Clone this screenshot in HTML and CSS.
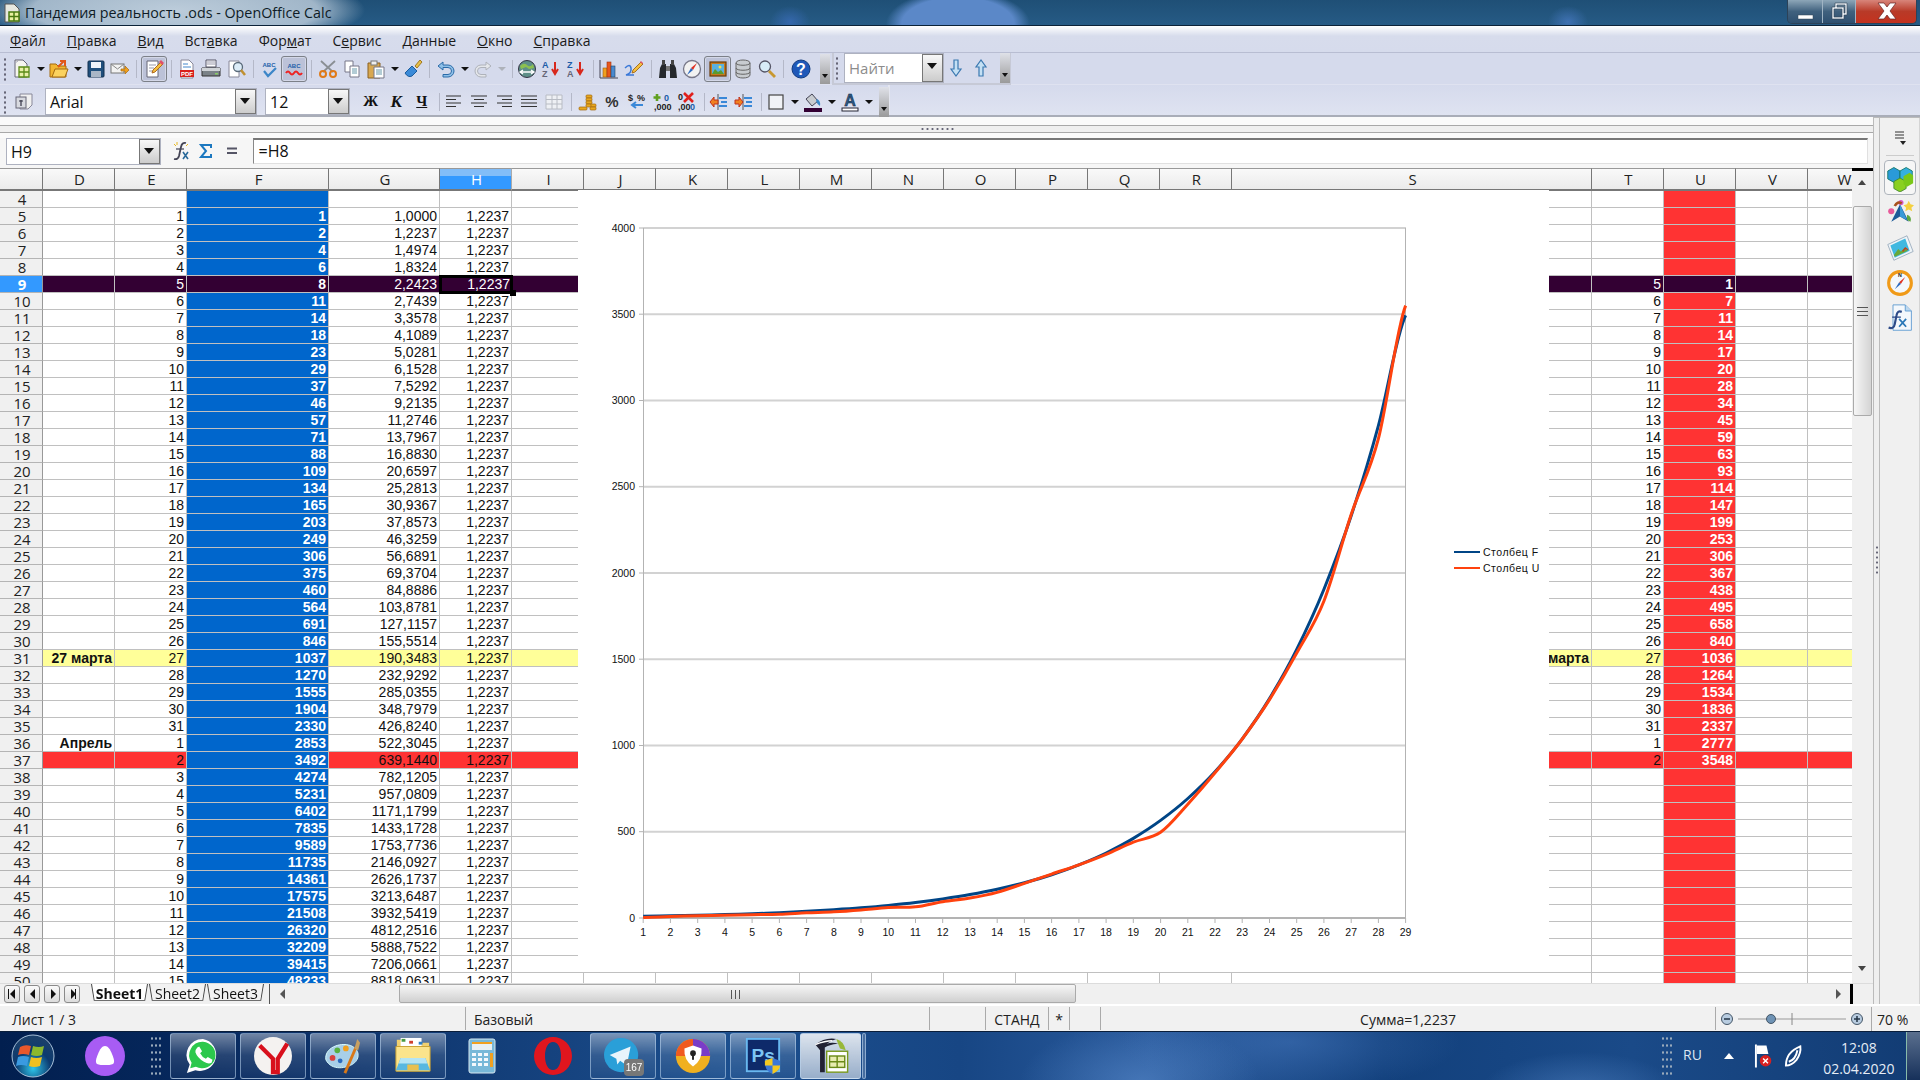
FILE: index.html
```html
<!DOCTYPE html>
<html lang="ru">
<head>
<meta charset="utf-8">
<title>Пандемия реальность .ods - OpenOffice Calc</title>
<link rel="stylesheet" href="styles.css">
</head>
<body>
<header class="titlebar">
  <svg class="ti" viewBox="0 0 20 20"><path d="M3 1h9l5 5v13H3z" fill="#e8e8e0" stroke="#555"/><path d="M7 9h10v9H7z" fill="#e8f0a0" stroke="#4a7a10" stroke-width="1.5"/><path d="M7 13.5h10M12 9v9" stroke="#4a7a10" stroke-width="1.5"/></svg>
  <span class="title-text">Пандемия реальность .ods - OpenOffice Calc</span>
  <div class="winbtns">
    <div class="wb"><svg width="35" height="23" viewBox="0 0 35 23"><rect x="10" y="15" width="15" height="4" fill="#fff" stroke="#345" stroke-width=".5"/></svg></div>
    <div class="wb"><svg width="33" height="23" viewBox="0 0 33 23"><path d="M12 3h12v12h-3v4H9V7h3zM14 5v2h7v6h1V5zM11 9v8h8V9z" fill="#e8eef4" stroke="#345" stroke-width=".6"/></svg></div>
    <div class="wb close"><svg width="60" height="23" viewBox="0 0 60 23"><path d="M22 3h6l3 4 3-4h6l-6 8 6 8h-6l-3-4-3 4h-6l6-8z" fill="#fff" stroke="#622" stroke-width=".7"/></svg></div>
  </div>
</header>

<nav class="menubar">
  <span><u>Ф</u>айл</span><span><u>П</u>равка</span><span><u>В</u>ид</span><span>Вст<u>а</u>вка</span><span>Фор<u>м</u>ат</span><span>С<u>е</u>рвис</span><span><u>Д</u>анные</span><span><u>О</u>кно</span><span><u>С</u>правка</span>
</nav>

<div class="tbrow tb1">
  <div class="grip"></div>
  <div class="ic"><svg viewBox="0 0 20 20"><path d="M3 1h8l4 4v13H3z" fill="#f5f5ee" stroke="#667"/><path d="M7 8h10v10H7z" fill="#e8f0a8" stroke="#5a8a16" stroke-width="1.3"/><path d="M7 13h10M12 8v10" stroke="#5a8a16" stroke-width="1.3"/><path d="M3 4l3-2" stroke="#aab"/></svg></div>
  <div class="dd"></div>
  <div class="ic"><svg viewBox="0 0 20 20"><path d="M1 5h6l2 2h8v11H1z" fill="#f2b632" stroke="#a36a10"/><path d="M3 18l3-8h13l-3 8z" fill="#fbd25e" stroke="#a36a10"/><path d="M9 8l6-6M11 2h5v5" fill="none" stroke="#e2571a" stroke-width="2"/></svg></div>
  <div class="dd"></div>
  <div class="ic"><svg viewBox="0 0 20 20"><rect x="2" y="2" width="16" height="16" rx="1" fill="#1f4f7c" stroke="#12304e"/><rect x="5" y="3" width="10" height="6" fill="#eef3f8"/><rect x="5" y="12" width="10" height="6" fill="#a9b6c6"/></svg></div>
  <div class="ic"><svg viewBox="0 0 20 20"><rect x="1" y="5" width="13" height="9" fill="#f2f2f2" stroke="#777"/><path d="M1 5l6.500 5L14 5" fill="none" stroke="#888"/><path d="M11 10h4V7l4 4-4 4v-3h-4z" fill="#f0a020" stroke="#a86a10" stroke-width=".7"/></svg></div>
  <div class="sep"></div>
  <div class="ic on"><svg viewBox="0 0 20 20"><path d="M3 2h11v16H3z" fill="#fff" stroke="#667"/><path d="M5 6h7M5 9h5M5 12h4" stroke="#99a"/><path d="M8 14l1-3 8-8 2 2-8 8z" fill="#f4c040" stroke="#b06a20"/><path d="M15 3l2-2 3 3-2 2z" fill="#e0506a"/></svg></div>
  <div class="sep s8"></div>
  <div class="ic"><svg viewBox="0 0 20 20"><path d="M4 1h8l4 4v14H4z" fill="#fff" stroke="#889"/><path d="M6 5h5M6 8h8" stroke="#48c"/><rect x="3" y="11" width="14" height="7" fill="#d8201c"/><text x="10" y="17" class="tiny w" text-anchor="middle">PDF</text></svg></div>
  <div class="ic"><svg viewBox="0 0 20 20"><path d="M5 1h10v7H5z" fill="#fff" stroke="#556"/><path d="M6 3h8M6 5h8" stroke="#99a"/><path d="M1 9h18v8H1z" fill="#7a8288" stroke="#333"/><path d="M1 9h18v3H1z" fill="#d0d4d8"/><rect x="14" y="14" width="3" height="1.500" fill="#8c6"/></svg></div>
  <div class="ic w26"><svg viewBox="0 0 20 20"><path d="M3 2h10v16H3z" fill="#fff" stroke="#889"/><circle cx="12" cy="8" r="4.500" fill="#dcecf8" stroke="#5a6a7a" stroke-width="1.300"/><path d="M15 11l4 5" stroke="#c09030" stroke-width="2.500"/></svg></div>
  <div class="sep s8"></div>
  <div class="ic"><svg viewBox="0 0 20 20"><text x="10" y="8" class="tiny b" text-anchor="middle">ABC</text><path d="M5 12l4 5 8-8" fill="none" stroke="#3c86c8" stroke-width="2.200"/></svg></div>
  <div class="ic on"><svg viewBox="0 0 20 20"><text x="10" y="9" class="tiny b" text-anchor="middle">ABC</text><path d="M2 14q2-3 4 0t4 0 4 0 4 0" fill="none" stroke="#e22" stroke-width="2"/></svg></div>
  <div class="sep"></div>
  <div class="ic"><svg viewBox="0 0 20 20"><path d="M3 2l12 11M17 2L5 13" stroke="#8a8f94" stroke-width="1.800"/><circle cx="5" cy="15" r="3" fill="none" stroke="#e07a18" stroke-width="2"/><circle cx="15" cy="15" r="3" fill="none" stroke="#e07a18" stroke-width="2"/></svg></div>
  <div class="ic"><svg viewBox="0 0 20 20"><path d="M3 2h8v11H3z" fill="#fff" stroke="#778"/><path d="M8 7h9v11H8z" fill="#fff" stroke="#778"/><path d="M10 10h5M10 12h5M10 14h5" stroke="#69a"/></svg></div>
  <div class="ic"><svg viewBox="0 0 20 20"><path d="M2 4h12v15H2z" fill="#d8a850" stroke="#8a6020"/><rect x="5" y="2" width="6" height="4" fill="#eee" stroke="#777"/><path d="M8 8h10v11H8z" fill="#fff" stroke="#778"/><path d="M10 11h6M10 13h6M10 15h6" stroke="#69a"/></svg></div>
  <div class="dd"></div>
  <div class="ic"><svg viewBox="0 0 20 20"><path d="M2 14l7-7 5 5-5 5q-4 2-7-3z" fill="#3a8ad8" stroke="#1c5c9c"/><path d="M12 7l5-6 2 2-5 6z" fill="#e8c048" stroke="#a07820"/></svg></div>
  <div class="sep"></div>
  <div class="ic"><svg viewBox="0 0 20 20"><path d="M7 3L2 7l5 4V8.500h5a3.500 3.500 0 0 1 0 7H7V18h5a6 6 0 0 0 0-12H7z" fill="#8ec0e8" stroke="#2a6aa8"/></svg></div>
  <div class="dd"></div>
  <div class="ic"><svg viewBox="0 0 20 20"><path d="M13 3l5 4-5 4V8.500H8a3.500 3.500 0 0 0 0 7h5V18H8A6 6 0 0 1 8 6h5z" fill="#e4e6ea" stroke="#aeb2ba"/></svg></div>
  <div class="dd off"></div>
  <div class="sep s7"></div>
  <div class="ic"><svg viewBox="0 0 20 20"><circle cx="10" cy="10" r="8.500" fill="#5e8f88" stroke="#334"/><path d="M3 7q4-4 7-1t6-1l1 4-5 1-3-2-5 2z" fill="#8cc050"/><path d="M4 13h12M6 15l-3-2 3-2M14 11l3 2-3 2" fill="none" stroke="#fff" stroke-width="1.300"/></svg></div>
  <div class="ic"><svg viewBox="0 0 20 20"><text x="1" y="9" class="tiny b big">A</text><text x="1" y="18" class="tiny g big">Z</text><path d="M14 3v11M11 10l3 5 3-5" fill="none" stroke="#d8281c" stroke-width="2"/></svg></div>
  <div class="ic w26"><svg viewBox="0 0 20 20"><text x="1" y="9" class="tiny b big">Z</text><text x="1" y="18" class="tiny g big">A</text><path d="M14 3v11M11 10l3 5 3-5" fill="none" stroke="#d8281c" stroke-width="2"/></svg></div>
  <div class="sep s8"></div>
  <div class="ic"><svg viewBox="0 0 20 20"><path d="M1 1v18h18" fill="none" stroke="#445"/><rect x="4" y="9" width="4" height="9" fill="#f0a020" stroke="#a06010" stroke-width=".6"/><rect x="8" y="3" width="4" height="15" fill="#e8581c" stroke="#a03010" stroke-width=".6"/><rect x="12" y="7" width="4" height="11" fill="#4a8ad0" stroke="#246" stroke-width=".6"/></svg></div>
  <div class="ic w26"><svg viewBox="0 0 20 20"><path d="M1 9q5-5 6 0t-5 7h8" fill="none" stroke="#3a78d8" stroke-width="1.500"/><path d="M8 14l1-3 8-8 2 2-8 8z" fill="#f4c040" stroke="#a87020"/><path d="M16 3l1-1 2 2-1 1z" fill="#e0506a"/></svg></div>
  <div class="sep"></div>
  <div class="ic"><svg viewBox="0 0 20 20"><path d="M2 9l2-4h4v14H1zM18 9l-2-4h-4v14h7z" fill="#25282c"/><rect x="4" y="1" width="3" height="5" fill="#444"/><rect x="13" y="1" width="3" height="5" fill="#444"/><rect x="8" y="7" width="4" height="5" fill="#777"/></svg></div>
  <div class="ic"><svg viewBox="0 0 20 20"><circle cx="10" cy="10" r="8.500" fill="#f2f2f2" stroke="#778" stroke-width="1.300"/><path d="M15 4l-6 5 2 2z" fill="#e03020"/><path d="M5 16l4-7 2 2z" fill="#2a6ac0"/></svg></div>
  <div class="ic w27 on"><svg viewBox="0 0 20 20"><rect x="2" y="3" width="16" height="14" fill="#c27a20" stroke="#6a3a08" stroke-width="1.200"/><rect x="4" y="5" width="12" height="10" fill="#58b0e0"/><path d="M4 15l3-5 3 3 3-2 3 4z" fill="#5a9a30"/><circle cx="12" cy="8" r="1.500" fill="#f4e050"/></svg></div>
  <div class="ic"><svg viewBox="0 0 20 20"><path d="M3 4c0-4 14-4 14 0v12c0 4-14 4-14 0z" fill="#c8ccd0" stroke="#666"/><path d="M3 4c0 3 14 3 14 0M3 9c0 3 14 3 14 0M3 13c0 3 14 3 14 0" fill="none" stroke="#666"/></svg></div>
  <div class="ic"><svg viewBox="0 0 20 20"><circle cx="8" cy="7.500" r="5.500" fill="#d8ecf8" stroke="#556" stroke-width="1.300"/><path d="M12 12l6 6" stroke="#c89830" stroke-width="2.800"/></svg></div>
  <div class="sep s10"></div>
  <div class="ic"><svg viewBox="0 0 20 20"><circle cx="10" cy="10" r="9" fill="#1f58b8" stroke="#123c80"/><text x="10" y="15.500" class="q" text-anchor="middle">?</text></svg></div>
  <div class="over"></div>
  <div class="tbgap"></div>
  <div class="findbar">
    <div class="grip"></div>
    <div class="combo find"><span class="ctext grey">Найти</span><i class="cbtn bordered"></i></div>
    <div class="ic"><svg viewBox="0 0 20 20"><path d="M8 2h4v9h3l-5 7-5-7h3z" fill="#c4e0f4" stroke="#3a78b0" stroke-width="1.200"/></svg></div>
    <div class="ic mid"><svg viewBox="0 0 20 20"><path d="M8 18h4V9h3l-5-7-5 7h3z" fill="#c4e0f4" stroke="#3a78b0" stroke-width="1.200"/></svg></div>
    <div class="over"></div>
  </div>
</div>

<div class="tbrow tb2">
  <div class="tb2main">
    <div class="grip"></div>
    <div class="ic stylei"><svg viewBox="0 0 20 20"><path d="M6 2h12v11l-4 4H6z" fill="#f0f0f0" stroke="#889"/><rect x="2" y="5" width="10" height="11" fill="#d8dae0" stroke="#667"/><path d="M7 8v6M5 9h4" stroke="#334" stroke-width="1.200"/></svg></div>
    <div class="combo font"><span class="ctext">Arial</span><i class="cbtn"></i></div>
    <div class="combo size"><span class="ctext">12</span><i class="cbtn"></i></div>
    <div class="fmt">Ж</div><div class="fmt it">К</div><div class="fmt ul">Ч</div>
    <div class="sep s7"></div>
    <div class="ic w25"><svg viewBox="0 0 20 20"><path d="M2 4h15M2 7.500h10M2 11h15M2 14.500h10" stroke="#333" stroke-width="1.200"/></svg></div>
    <div class="ic w25"><svg viewBox="0 0 20 20"><path d="M2 4h16M5 7.500h10M2 11h16M5 14.500h10" stroke="#333" stroke-width="1.200"/></svg></div>
    <div class="ic w25"><svg viewBox="0 0 20 20"><path d="M3 4h15M8 7.500h10M3 11h15M8 14.500h10" stroke="#333" stroke-width="1.200"/></svg></div>
    <div class="ic w25"><svg viewBox="0 0 20 20"><path d="M2 4h16M2 7.500h16M2 11h16M2 14.500h16" stroke="#333" stroke-width="1.200"/></svg></div>
    <div class="ic w25"><svg viewBox="0 0 20 20"><path d="M2 3h16v14H2zM2 7.500h16M2 12h16M8 3v14M13 3v14" fill="#eef0f4" stroke="#b8bcc4"/></svg></div>
    <div class="sep s8"></div>
    <div class="ic w25"><svg viewBox="0 0 20 20"><g fill="#e8a820" stroke="#a06810" stroke-width=".7"><rect x="9" y="3" width="6" height="3" rx="1"/><rect x="9" y="6" width="6" height="3" rx="1"/><rect x="9" y="9" width="6" height="3" rx="1"/><rect x="13" y="12" width="6" height="3" rx="1"/><rect x="13" y="15" width="6" height="3" rx="1"/><rect x="2" y="15" width="8" height="3" rx="1"/><rect x="9" y="12" width="5" height="3" rx="1"/></g></svg></div>
    <div class="ic w25"><span class="pct">%</span></div>
    <div class="ic w25"><svg viewBox="0 0 20 20"><text x="1" y="9" class="tiny k big">$</text><text x="10" y="9" class="tiny k big">%</text><path d="M16 13H6M9 10l-4 3 4 3" fill="none" stroke="#3a88d8" stroke-width="2"/></svg></div>
    <div class="ic w25"><svg viewBox="0 0 20 20"><path d="M5 2v7M1.500 5.500h7" stroke="#60a020" stroke-width="2.600"/><text x="12" y="9" class="tiny b big">0</text><text x="2" y="18" class="tiny k big">,000</text></svg></div>
    <div class="ic w25"><svg viewBox="0 0 20 20"><text x="1" y="8" class="tiny k big">0</text><path d="M7 1l9 9M16 1l-9 9" stroke="#e0201c" stroke-width="2.600"/><text x="1" y="18" class="tiny k big">,00</text><text x="13" y="18" class="tiny b big">0</text></svg></div>
    <div class="sep s7"></div>
    <div class="ic"><svg viewBox="0 0 20 20"><path d="M10 6h8M12 10h6M10 14h8" stroke="#3a88d8" stroke-width="1.800"/><path d="M9 2v16M9 5v0" stroke="#333" stroke-width=".8"/><path d="M9 8H5V5l-4 5 4 5v-3h4z" fill="#f08020" stroke="#c0301c"/></svg></div>
    <div class="ic w26"><svg viewBox="0 0 20 20"><path d="M10 6h8M12 10h6M10 14h8" stroke="#3a88d8" stroke-width="1.800"/><path d="M9 2v16" stroke="#333" stroke-width=".8"/><path d="M1 8h4V5l4 5-4 5v-3H1z" fill="#f08020" stroke="#c0301c"/></svg></div>
    <div class="sep s7"></div>
    <div class="ic"><svg viewBox="0 0 20 20"><rect x="3" y="3" width="14" height="14" fill="#f0f2f6" stroke="#444" stroke-width="1.200"/></svg></div>
    <div class="dd"></div>
    <div class="ic"><svg viewBox="0 0 20 20"><path d="M3 7l6-5 6 7-6 5z" fill="#c8ccd0" stroke="#445"/><path d="M14 7q4 2 3 7-3-2-4-5z" fill="#3a88c8"/><rect x="1" y="16" width="18" height="4" fill="#330033"/></svg></div>
    <div class="dd"></div>
    <div class="ic"><svg viewBox="0 0 20 20"><text x="10" y="14" class="fa" text-anchor="middle">A</text><rect x="2" y="16" width="16" height="3" fill="#fff" stroke="#223"/></svg></div>
    <div class="dd"></div>
    <div class="over tight"></div>
  </div>
</div>

<div class="work">
  <div class="leftcol">
    <div class="strip"><div class="strip-line"><span class="handle"></span></div></div>
    <div class="fbar">
      <div class="combo name"><span class="ctext">H9</span><i class="cbtn"></i></div>
      <div class="fbi fx"><svg viewBox="0 0 20 20"><path d="M15 2q-4-1-5 4l-2 9q-1 4-5 3" fill="none" stroke="#445" stroke-width="1.800"/><path d="M5 8h8" stroke="#445" stroke-width="1.200"/><path d="M12 11l5 7M17 11l-5 7" stroke="#2a6a9a" stroke-width="1.600"/><path d="M3 3l2 2M6 1v3M17 3l-2 2" stroke="#e8b820"/></svg></div>
      <div class="fbi"><svg viewBox="0 0 20 20"><path d="M15 7V4H5l5 6-5 6h10v-3" fill="none" stroke="#1c78c0" stroke-width="2"/></svg></div>
      <div class="fbi"><svg viewBox="0 0 20 20"><path d="M5 7.500h10M5 12h10" stroke="#556" stroke-width="1.800"/></svg></div>
      <div class="finput">=H8</div>
    </div>
    <div class="sheetarea">
      <div class="gridwrap">
        <table class="sheet">
          <colgroup><col class="c0"><col class="c72"><col class="c72"><col class="c142"><col class="c111"><col class="c72"><col class="c72"><col class="c72"><col class="c72"><col class="c72"><col class="c72"><col class="c72"><col class="c72"><col class="c72"><col class="c72"><col class="c72"><col class="c360"><col class="c72"><col class="c72"><col class="c72"><col class="c72"></colgroup>
          <thead><tr><th></th><th>D</th><th>E</th><th>F</th><th>G</th><th class="act">H</th><th>I</th><th>J</th><th>K</th><th>L</th><th>M</th><th>N</th><th>O</th><th>P</th><th>Q</th><th>R</th><th>S</th><th>T</th><th>U</th><th>V</th><th>W</th></tr></thead>
          <tbody>
<tr><th>4<td><td><td><td><td><td><td><td><td><td><td><td><td><td><td><td><td><td><td><td>
<tr><th>5<td><td>1<td>1<td>1,0000<td>1,2237<td><td><td><td><td><td><td><td><td><td><td><td><td><td><td>
<tr><th>6<td><td>2<td>2<td>1,2237<td>1,2237<td><td><td><td><td><td><td><td><td><td><td><td><td><td><td>
<tr><th>7<td><td>3<td>4<td>1,4974<td>1,2237<td><td><td><td><td><td><td><td><td><td><td><td><td><td><td>
<tr><th>8<td><td>4<td>6<td>1,8324<td>1,2237<td><td><td><td><td><td><td><td><td><td><td><td><td><td><td>
<tr class="d"><th>9<td><td>5<td>8<td>2,2423<td class="cur">1,2237<td><td><td><td><td><td><td><td><td><td><td><td>5<td>1<td><td>
<tr><th>10<td><td>6<td>11<td>2,7439<td>1,2237<td><td><td><td><td><td><td><td><td><td><td><td>6<td>7<td><td>
<tr><th>11<td><td>7<td>14<td>3,3578<td>1,2237<td><td><td><td><td><td><td><td><td><td><td><td>7<td>11<td><td>
<tr><th>12<td><td>8<td>18<td>4,1089<td>1,2237<td><td><td><td><td><td><td><td><td><td><td><td>8<td>14<td><td>
<tr><th>13<td><td>9<td>23<td>5,0281<td>1,2237<td><td><td><td><td><td><td><td><td><td><td><td>9<td>17<td><td>
<tr><th>14<td><td>10<td>29<td>6,1528<td>1,2237<td><td><td><td><td><td><td><td><td><td><td><td>10<td>20<td><td>
<tr><th>15<td><td>11<td>37<td>7,5292<td>1,2237<td><td><td><td><td><td><td><td><td><td><td><td>11<td>28<td><td>
<tr><th>16<td><td>12<td>46<td>9,2135<td>1,2237<td><td><td><td><td><td><td><td><td><td><td><td>12<td>34<td><td>
<tr><th>17<td><td>13<td>57<td>11,2746<td>1,2237<td><td><td><td><td><td><td><td><td><td><td><td>13<td>45<td><td>
<tr><th>18<td><td>14<td>71<td>13,7967<td>1,2237<td><td><td><td><td><td><td><td><td><td><td><td>14<td>59<td><td>
<tr><th>19<td><td>15<td>88<td>16,8830<td>1,2237<td><td><td><td><td><td><td><td><td><td><td><td>15<td>63<td><td>
<tr><th>20<td><td>16<td>109<td>20,6597<td>1,2237<td><td><td><td><td><td><td><td><td><td><td><td>16<td>93<td><td>
<tr><th>21<td><td>17<td>134<td>25,2813<td>1,2237<td><td><td><td><td><td><td><td><td><td><td><td>17<td>114<td><td>
<tr><th>22<td><td>18<td>165<td>30,9367<td>1,2237<td><td><td><td><td><td><td><td><td><td><td><td>18<td>147<td><td>
<tr><th>23<td><td>19<td>203<td>37,8573<td>1,2237<td><td><td><td><td><td><td><td><td><td><td><td>19<td>199<td><td>
<tr><th>24<td><td>20<td>249<td>46,3259<td>1,2237<td><td><td><td><td><td><td><td><td><td><td><td>20<td>253<td><td>
<tr><th>25<td><td>21<td>306<td>56,6891<td>1,2237<td><td><td><td><td><td><td><td><td><td><td><td>21<td>306<td><td>
<tr><th>26<td><td>22<td>375<td>69,3704<td>1,2237<td><td><td><td><td><td><td><td><td><td><td><td>22<td>367<td><td>
<tr><th>27<td><td>23<td>460<td>84,8886<td>1,2237<td><td><td><td><td><td><td><td><td><td><td><td>23<td>438<td><td>
<tr><th>28<td><td>24<td>564<td>103,8781<td>1,2237<td><td><td><td><td><td><td><td><td><td><td><td>24<td>495<td><td>
<tr><th>29<td><td>25<td>691<td>127,1157<td>1,2237<td><td><td><td><td><td><td><td><td><td><td><td>25<td>658<td><td>
<tr><th>30<td><td>26<td>846<td>155,5514<td>1,2237<td><td><td><td><td><td><td><td><td><td><td><td>26<td>840<td><td>
<tr class="y"><th>31<td class="lb">27 марта<td>27<td>1037<td>190,3483<td>1,2237<td><td><td><td><td><td><td><td><td><td><td class="lb">27 марта<td>27<td>1036<td><td>
<tr><th>32<td><td>28<td>1270<td>232,9292<td>1,2237<td><td><td><td><td><td><td><td><td><td><td><td>28<td>1264<td><td>
<tr><th>33<td><td>29<td>1555<td>285,0355<td>1,2237<td><td><td><td><td><td><td><td><td><td><td><td>29<td>1534<td><td>
<tr><th>34<td><td>30<td>1904<td>348,7979<td>1,2237<td><td><td><td><td><td><td><td><td><td><td><td>30<td>1836<td><td>
<tr><th>35<td><td>31<td>2330<td>426,8240<td>1,2237<td><td><td><td><td><td><td><td><td><td><td><td>31<td>2337<td><td>
<tr><th>36<td class="lb">Апрель<td>1<td>2853<td>522,3045<td>1,2237<td><td><td><td><td><td><td><td><td><td><td><td>1<td>2777<td><td>
<tr class="r"><th>37<td><td>2<td>3492<td>639,1440<td>1,2237<td><td><td><td><td><td><td><td><td><td><td><td>2<td>3548<td><td>
<tr><th>38<td><td>3<td>4274<td>782,1205<td>1,2237<td><td><td><td><td><td><td><td><td><td><td><td><td><td><td>
<tr><th>39<td><td>4<td>5231<td>957,0809<td>1,2237<td><td><td><td><td><td><td><td><td><td><td><td><td><td><td>
<tr><th>40<td><td>5<td>6402<td>1171,1799<td>1,2237<td><td><td><td><td><td><td><td><td><td><td><td><td><td><td>
<tr><th>41<td><td>6<td>7835<td>1433,1728<td>1,2237<td><td><td><td><td><td><td><td><td><td><td><td><td><td><td>
<tr><th>42<td><td>7<td>9589<td>1753,7736<td>1,2237<td><td><td><td><td><td><td><td><td><td><td><td><td><td><td>
<tr><th>43<td><td>8<td>11735<td>2146,0927<td>1,2237<td><td><td><td><td><td><td><td><td><td><td><td><td><td><td>
<tr><th>44<td><td>9<td>14361<td>2626,1737<td>1,2237<td><td><td><td><td><td><td><td><td><td><td><td><td><td><td>
<tr><th>45<td><td>10<td>17575<td>3213,6487<td>1,2237<td><td><td><td><td><td><td><td><td><td><td><td><td><td><td>
<tr><th>46<td><td>11<td>21508<td>3932,5419<td>1,2237<td><td><td><td><td><td><td><td><td><td><td><td><td><td><td>
<tr><th>47<td><td>12<td>26320<td>4812,2516<td>1,2237<td><td><td><td><td><td><td><td><td><td><td><td><td><td><td>
<tr><th>48<td><td>13<td>32209<td>5888,7522<td>1,2237<td><td><td><td><td><td><td><td><td><td><td><td><td><td><td>
<tr><th>49<td><td>14<td>39415<td>7206,0661<td>1,2237<td><td><td><td><td><td><td><td><td><td><td><td><td><td><td>
<tr><th>50<td><td>15<td>48233<td>8818,0631<td>1,2237<td><td><td><td><td><td><td><td><td><td><td><td><td><td><td>
          </tbody>
        </table>
        <svg class="chart" viewBox="578 190 971 782" width="971" height="782">
          <rect x="578" y="190" width="971" height="782" fill="#fff"/>
          <g class="gl"><path d="M643 228H1406M643 314.200H1406M643 400.500H1406M643 486.700H1406M643 573H1406M643 659.200H1406M643 745.500H1406M643 831.700H1406"/></g>
          <path class="ax" d="M643.500 228V918M1405.500 228V918M639 228h4M639 314.200h4M639 400.500h4M639 486.700h4M639 573h4M639 659.200h4M639 745.500h4M639 831.700h4M639 918h4"/>
          <path class="ax2" d="M643 918H1406"/>
          <path class="ax" d="M643.200 918v5M670.400 918v5M697.700 918v5M724.900 918v5M752.100 918v5M779.400 918v5M806.600 918v5M833.800 918v5M861 918v5M888.300 918v5M915.500 918v5M942.700 918v5M970 918v5M997.200 918v5M1024.400 918v5M1051.600 918v5M1078.900 918v5M1106.100 918v5M1133.300 918v5M1160.600 918v5M1187.800 918v5M1215 918v5M1242.200 918v5M1269.500 918v5M1296.700 918v5M1323.900 918v5M1351.200 918v5M1378.400 918v5M1405.600 918v5"/>
          <g class="yl" text-anchor="end"><text x="635" y="231.500">4000</text><text x="635" y="317.700">3500</text><text x="635" y="404">3000</text><text x="635" y="490.200">2500</text><text x="635" y="576.500">2000</text><text x="635" y="662.700">1500</text><text x="635" y="749">1000</text><text x="635" y="835.200">500</text><text x="635" y="921.500">0</text></g>
          <g class="yl" text-anchor="middle"><text x="643.200" y="936">1</text><text x="670.400" y="936">2</text><text x="697.700" y="936">3</text><text x="724.900" y="936">4</text><text x="752.100" y="936">5</text><text x="779.400" y="936">6</text><text x="806.600" y="936">7</text><text x="833.800" y="936">8</text><text x="861" y="936">9</text><text x="888.300" y="936">10</text><text x="915.500" y="936">11</text><text x="942.700" y="936">12</text><text x="970" y="936">13</text><text x="997.200" y="936">14</text><text x="1024.400" y="936">15</text><text x="1051.600" y="936">16</text><text x="1078.900" y="936">17</text><text x="1106.100" y="936">18</text><text x="1133.300" y="936">19</text><text x="1160.600" y="936">20</text><text x="1187.800" y="936">21</text><text x="1215" y="936">22</text><text x="1242.200" y="936">23</text><text x="1269.500" y="936">24</text><text x="1296.700" y="936">25</text><text x="1323.900" y="936">26</text><text x="1351.200" y="936">27</text><text x="1378.400" y="936">28</text><text x="1405.600" y="936">29</text></g>
          <g transform="translate(643.2 917.7) scale(27.23 -0.1725)">
            <path class="sf" vector-effect="non-scaling-stroke" d="M0 8S.67 10 1 11S1.670 12.800 2 14S2.670 16.500 3 18S3.670 21.200 4 23S4.670 26.700 5 29S5.670 34.200 6 37S6.670 42.700 7 46S7.670 52.800 8 57S8.670 65.800 9 71S9.670 81.700 10 88S10.670 101.300 11 109S11.670 124.700 12 134S12.670 153.500 13 165S13.670 189 14 203S14.670 231.800 15 249S15.670 285 16 306S16.670 349.300 17 375S17.670 428.500 18 460S18.670 525.500 19 564S19.670 644 20 691S20.670 788.300 21 846S21.670 966.300 22 1037S22.670 1183.700 23 1270S23.670 1449.300 24 1555S24.670 1774.800 25 1904S25.670 2171.800 26 2330S26.670 2659.300 27 2853S27.670 3385.500 28 3492"/>
            <path class="su" vector-effect="non-scaling-stroke" d="M0 1S.67 5.300 1 7S1.670 9.800 2 11S2.670 13 3 14S3.670 16 4 17S4.670 18.200 5 20S5.670 25.700 6 28S6.670 31.200 7 34S7.670 40.800 8 45S8.670 56 9 59S9.670 57.300 10 63S10.670 84.500 11 93S11.670 105 12 114S12.670 132.800 13 147S13.670 181.300 14 199S14.670 235.200 15 253S15.670 287 16 306S16.670 345 17 367S17.670 416.700 18 438S18.670 458.300 19 495S19.670 600.500 20 658S20.670 777 21 840S21.670 965.300 22 1036S22.670 1181 23 1264S23.670 1438.700 24 1534S24.670 1702.200 25 1836S25.670 2180.200 26 2337S26.670 2575.200 27 2777S27.670 3419.500 28 3548"/>
          </g>
          <path class="sf thin" d="M1454 552h26"/><path class="su thin" d="M1454 568h26"/>
          <g class="leg"><text x="1483" y="556">Столбец F</text><text x="1483" y="572">Столбец U</text></g>
        </svg>
      </div>
      <aside class="vscroll">
        <div class="vcap"></div>
        <div class="arrow up"></div>
        <div class="vthumb"><span class="tgrip"></span></div>
        <div class="vfill"></div>
        <div class="arrow down"></div>
      </aside>
    </div>
    <div class="tabbar">
      <div class="nav"><span class="nb f"></span><span class="nb p"></span><span class="nb n"></span><span class="nb l"></span></div>
      <div class="tab active"><span>Sheet1</span></div><div class="tab"><span>Sheet2</span></div><div class="tab"><span>Sheet3</span></div>
      <div class="tabend"></div>
      <div class="hscroll">
        <span class="hl"></span>
        <div class="hthumb"><span class="hgrip"></span></div>
        <span class="hr"></span>
      </div>
    </div>
  </div>
  <aside class="sidebar">
    <div class="sgrip"></div>
    <div class="sicons">
      <div class="smenu"><svg width="14" height="16" viewBox="0 0 14 16"><path d="M2 2h9M2 5h9M2 8h9" stroke="#333"/><path d="M7 11h6l-3 4z" fill="#222"/></svg></div>
      <div class="srule"></div>
      <div class="si on"><svg viewBox="0 0 32 32"><path d="M2 8l7-4 7 4v9l-7 4-7-4z" fill="#2a9ad8" stroke="#176"/><path d="M16 8l7-4 7 4v9l-7 4-7-4z" fill="#34b0e0" stroke="#176"/><path d="M9 20l7-4 7 4v8l-7 4-7-4z" fill="#8ad020" stroke="#483"/><path d="M20 14l7-4 4 3v9l-7 4-4-3z" fill="#7ac818"/></svg></div>
      <div class="si"><svg viewBox="0 0 32 32"><path d="M6 26L16 6l10 20-10-6z" fill="#1c5a98"/><path d="M16 6l8 18-8-4z" fill="#3a9ad8"/><circle cx="6" cy="14" r="3.500" fill="#e85a9a"/><circle cx="17" cy="4" r="3" fill="#d85ac8"/><path d="M26 2l2 4 4 1-3 3 1 4-4-2-4 2 1-4-3-3 4-1z" fill="#f4d040"/><path d="M10 8q3-6 8-3" fill="none" stroke="#a8501c" stroke-width="3"/><path d="M24 18q6 2 4 8l-4-2z" fill="#60a840"/></svg></div>
      <div class="si"><svg viewBox="0 0 32 32"><path d="M2 12L24 2l7 18-22 10z" fill="#eef4f8" stroke="#9ab"/><path d="M5 13l17-8 5 14-17 8z" fill="#40b8e0"/><path d="M9 24l5-7 3 3 4-4 4 3-15 7z" fill="#68a838"/><path d="M19 20l3-4 3 2" fill="none" stroke="#c04020" stroke-width="1.500"/></svg></div>
      <div class="si"><svg viewBox="0 0 32 32"><circle cx="16" cy="16" r="13" fill="#f4f8fc" stroke="#f09a18" stroke-width="3.500"/><path d="M22 9l-7 6 2 2z" fill="#e03020"/><path d="M10 23l5-8 2 2z" fill="#2a6ac0"/><text x="16" y="9" class="tiny k" text-anchor="middle">N</text></svg></div>
      <div class="si"><svg viewBox="0 0 32 32"><path d="M8 1h14l7 7v22H8z" fill="#f4f8fc" stroke="#5a98d0"/><path d="M22 1v7h7" fill="#bcd8f0" stroke="#5a98d0"/><path d="M18 9q-5-2-6 4l-2 10q-1 6-7 4" fill="none" stroke="#2c4a88" stroke-width="2.500"/><path d="M7 15h10" stroke="#2c4a88" stroke-width="1.500"/><path d="M15 17l8 9M23 17l-8 9" stroke="#2a78b8" stroke-width="2"/></svg></div>
    </div>
  </aside>
</div>

<footer class="statusbar">
  <div class="st st-sheet">Лист 1 / 3</div>
  <div class="st st-style">Базовый</div>
  <div class="st st-lang"></div>
  <div class="st st-mode">СТАНД</div>
  <div class="st st-mod">*</div>
  <div class="st st-sel"></div>
  <div class="st st-sum">Сумма=1,2237</div>
  <div class="st-zoom"><svg width="156" height="24" viewBox="0 0 156 24"><circle cx="11" cy="12" r="5.500" fill="#b8cce0" stroke="#456"/><path d="M8 12h6" stroke="#234" stroke-width="1.500"/><path d="M22 12h108" stroke="#999"/><path d="M76 6v12" stroke="#888"/><circle cx="55" cy="12" r="4.500" fill="#6f93b5" stroke="#456"/><circle cx="141" cy="12" r="5.500" fill="#b8cce0" stroke="#456"/><path d="M138 12h6M141 9v6" stroke="#234" stroke-width="1.500"/></svg></div>
  <div class="st st-pct">70 %</div>
</footer>

<div class="taskbar">
  <div class="orb"><svg viewBox="0 0 44 44"><defs><radialGradient id="og" cx="50%" cy="80%" r="70%"><stop offset="0" stop-color="#2ec4e8"/><stop offset=".6" stop-color="#0c3a70"/><stop offset="1" stop-color="#1a3f6a"/></radialGradient></defs><circle cx="22" cy="22" r="21" fill="url(#og)" stroke="#a8c0d8"/><path d="M9 13q5-3 11-1l-2 9q-6-2-11 0z" fill="#e8582c"/><path d="M22 12q6 2 11 0l-2 9q-5 2-11 0z" fill="#8cb82c"/><path d="M7 23q5-2 11 0l-2 9q-6-2-11 0z" fill="#3a9ae0"/><path d="M20 23q5 2 11 0l-2 9q-6 2-11 0z" fill="#f0c020"/></svg></div>
  <div class="alice"><svg viewBox="0 0 40 40"><circle cx="20" cy="20" r="20" fill="#a85cf4"/><path d="M20 10c3 0 5 3 7 8 2 5 3 8 1 10-2 1-5 1-8 1s-6 0-8-1c-2-2-1-5 1-10 2-5 4-8 7-8z" fill="#fff"/></svg></div>
  <div class="tgrip2"></div>
  <div class="tk"><svg viewBox="0 0 40 40"><path d="M20 2a17 17 0 0 0-14 27L3 38l9-3A17 17 0 1 0 20 2z" fill="#fff"/><path d="M20 5a14 14 0 0 0-12 22l-1.500 6 6-1.700A14 14 0 1 0 20 5z" fill="#2cc84c"/><path d="M14 11l2-1 3 5-2 2q2 4 6 6l2-2 5 3-1 3q-3 2-8-1-7-4-9-10 0-3 2-5z" fill="#fff"/></svg></div>
  <div class="tk"><svg viewBox="0 0 40 40"><circle cx="20" cy="20" r="20" fill="#f4f2f0"/><path d="M6 9l14 14v14h5V23L35 7" fill="none" stroke="#d8101c" stroke-width="4.500"/></svg></div>
  <div class="tk"><svg viewBox="0 0 40 40"><path d="M2 24C0 12 16 5 28 9c10 4 10 14 3 19S8 36 2 24z" fill="#a8cfe8" stroke="#dff"/><circle cx="9" cy="22" r="3" fill="#d84040"/><circle cx="14" cy="14" r="3" fill="#58b040"/><circle cx="23" cy="12" r="3" fill="#f0a020"/><circle cx="17" cy="25" r="2.500" fill="#2a6ac0"/><path d="M22 38L34 10" stroke="#d87818" stroke-width="3"/><path d="M32 12l3-10 3 4-2 8z" fill="#c8a060"/></svg></div>
  <div class="tk"><svg viewBox="0 0 40 40"><path d="M3 3h16l3 3h15v30H3z" fill="#f0d070"/><path d="M7 1h22v10H7z" fill="#fff"/><path d="M8 2h4v3H8z" fill="#4a9a40"/><path d="M16 4h4v3h-4z" fill="#d04030"/><path d="M26 5h4v3h-4z" fill="#3080c8"/><path d="M2 10h36v26H2z" fill="#fbe48c" stroke="#c8a030"/><path d="M7 22h26l5 13H2z" fill="#58b8e0"/><path d="M7 22h26l2 6H5z" fill="#b4e4f4"/><rect x="14" y="29" width="12" height="6" fill="#e8c050"/></svg></div>
  <div class="tkb"><svg viewBox="0 0 40 40"><rect x="6" y="3" width="26" height="34" rx="2" fill="#78b8d8" stroke="#d8e8f0"/><rect x="9" y="6" width="20" height="8" fill="#e8f0f4"/><rect x="9" y="6" width="20" height="2" fill="#f0a020"/><g fill="#f4f8fc"><rect x="9" y="17" width="4" height="3"/><rect x="15" y="17" width="4" height="3"/><rect x="21" y="17" width="4" height="3"/><rect x="9" y="22" width="4" height="3"/><rect x="15" y="22" width="4" height="3"/><rect x="21" y="22" width="4" height="3"/><rect x="9" y="27" width="4" height="3"/><rect x="15" y="27" width="4" height="3"/><rect x="21" y="27" width="4" height="3"/></g><rect x="27" y="17" width="3" height="14" fill="#f0a020"/></svg></div>
  <div class="tkb op"><svg viewBox="0 0 40 40"><path d="M20 1a19 19 0 1 0 0 38 19 19 0 0 0 0-38zm0 5c5 0 8 6 8 14s-3 14-8 14-8-6-8-14 3-14 8-14z" fill="#e0161e" fill-rule="evenodd"/></svg></div>
  <div class="tk tg"><svg viewBox="0 0 40 40"><circle cx="18" cy="19" r="18" fill="#2a9fd8"/><path d="M6 19l22-9-4 20-7-5-3 4-1-6z" fill="#e8f4fb"/></svg><span class="badge">167</span></div>
  <div class="tk"><svg viewBox="0 0 40 40"><circle cx="20" cy="20" r="18" fill="#f0b020"/><path d="M20 2a18 18 0 0 1 18 18H20z" fill="#7a3cc8"/><path d="M2 20A18 18 0 0 1 20 2v18z" fill="#f05a20"/><path d="M20 9l9 3q1 12-9 19-10-7-9-19z" fill="#fff"/><circle cx="20" cy="17" r="3" fill="#222"/><rect x="19" y="18" width="2" height="6" fill="#222"/></svg></div>
  <div class="tk"><svg viewBox="0 0 40 40"><rect x="3" y="2" width="34" height="34" fill="#0e2a6a" stroke="#68b8f0" stroke-width="2"/><text x="8" y="26" class="ps">Ps</text><path d="M30 22l8 3q1 10-8 14-9-4-8-14z" fill="#3a78d8"/><path d="M30 22v8h8q0 5-8 9v-9h-8q0-3 0-5z" fill="#f4c820"/></svg></div>
  <div class="tk activek"><svg viewBox="0 0 40 40"><path d="M4 8q10-8 22-6-6 2-10 5 6-2 12 0-10 1-14 4v26H9V14z" fill="#223"/><path d="M4 8q10-4 18-4" stroke="#fff" stroke-width="1.500" fill="none"/><path d="M26 2q8 2 10 12l-6-2z" fill="#98b838"/><rect x="16" y="15" width="22" height="22" fill="#fff" stroke="#7a9a20" stroke-width="1.500"/><rect x="19" y="20" width="16" height="12" fill="#e8ecb0" stroke="#6a8a18" stroke-width="1.500"/><path d="M19 26h16M27 20v12" stroke="#6a8a18" stroke-width="1.500"/></svg></div>
  <div class="tkend"></div>
  <div class="tray">
    <div class="tgrip2 t3"></div>
    <span class="lang">RU</span>
    <span class="trayup"></span>
    <svg class="flag" width="18" height="26" viewBox="0 0 18 26"><path d="M2 1v24" stroke="#fff" stroke-width="2"/><path d="M3 2h10l2 9H3z" fill="#fff"/><circle cx="12" cy="18" r="6" fill="#d82020"/><path d="M9.500 15.500l5 5M14.500 15.500l-5 5" stroke="#fff" stroke-width="1.500"/></svg>
    <svg class="swirl" width="20" height="24" viewBox="0 0 20 24"><path d="M2 22Q2 8 17 2q1 7-4 14-5 6-11 6zM5 18q7-2 9-12" fill="none" stroke="#fff" stroke-width="2"/></svg>
    <div class="clock"><span>12:08</span><span>02.04.2020</span></div>
    <div class="showdesk"></div>
  </div>
</div>
</body>
</html>
```
FILE: styles.css
```css
* { box-sizing: border-box; }
html, body { margin: 0; padding: 0; }
body {
  width: 1920px; height: 1080px; overflow: hidden;
  display: flex; flex-direction: column;
  font-family: "Open Sans", "Noto Sans", sans-serif;
  color: #111; background: #f0f0f0;
}

/* title bar */
.titlebar {
  height: 26px; flex: none; display: flex; align-items: center; position: relative;
  padding: 0 0 0 2px;
  background:
    radial-gradient(ellipse 190px 40px at 175px 10px, rgba(215,225,235,.85) 0, rgba(215,225,235,.7) 75%, rgba(215,225,235,0) 100%),
    radial-gradient(ellipse 72px 34px at 958px 24px, #5b88c8 0, #5b88c8 78%, rgba(91,136,200,0) 100%),
    radial-gradient(ellipse 20px 16px at 790px 22px, rgba(60,110,190,.7) 0, rgba(60,110,190,0) 100%),
    radial-gradient(ellipse 20px 16px at 1568px 22px, rgba(80,130,210,.6) 0, rgba(80,130,210,0) 100%),
    linear-gradient(#1f4f76, #265b85);
  border-bottom: 1px solid #0b2238;
}
.ti { width: 20px; height: 20px; margin-right: 3px; }
.title-text { font-size: 14.300px; color: #0e1c26; white-space: nowrap; }
.winbtns { position: absolute; right: 3px; top: 0; height: 24px; display: flex; border: 1px solid #2c4258; border-top: 0; border-radius: 0 0 5px 5px; overflow: hidden; }
.wb { width: 35px; background: linear-gradient(#8da6b8, #40617e 50%, #2e5070); border-right: 1px solid #a0b4c4; line-height: 0; }
.wb:nth-child(2) { width: 33px; }
.wb.close { width: 60px; border: 0; background: linear-gradient(#d8857a, #b83a28 50%, #c4321e); }

/* menu */
.menubar {
  height: 27px; flex: none; display: flex; gap: 21px; align-items: flex-end; padding: 0 0 2px 10px;
  background: linear-gradient(#fff 0, #d7dcec 10px, #d6dbec 100%);
  border-bottom: 1px solid #b8bdd2; font-size: 14px; color: #1a1a1a;
}
.menubar span { white-space: nowrap; }

/* toolbars */
.tbrow { height: 32px; flex: none; display: flex; align-items: center; background: #d5daec; }
.tb1 { padding-left: 3px; border-bottom: 1px solid #dfe2f0; }
.tb2 { background: linear-gradient(#d5daec, #dfe3f1); border-bottom: 2px solid #a9adb8; height: 32px; }
.tb2main { display: flex; align-items: center; height: 100%; padding: 3px 0 0 3px; width: 890px; border-right: 2px solid #e4e6f0; }
.grip { width: 7px; height: 24px; flex: none; background: radial-gradient(circle, #667 0, #667 1px, transparent 1.300px) 0 0 / 4px 5px repeat-y; }
.ic { width: 24px; height: 26px; flex: none; display: flex; align-items: center; justify-content: center; }
.ic svg { width: 20px; height: 20px; display: block; }
.w25 { width: 25px; } .w26 { width: 26px; } .w27 { width: 27px; }
.ic.on { width: 26px; background: #bcc2d8; border: 1px solid #7c8088; border-radius: 3px; box-shadow: inset 0 0 0 1px #d4d8e8; }
.ic.w27.on { width: 27px; }
.dd { width: 13px; height: 20px; flex: none; position: relative; }
.dd::before { content: ""; position: absolute; left: 3px; top: 8px; border: 4px solid transparent; border-top: 4px solid #111; border-bottom: 0; }
.dd.off::before { border-top-color: #aeb2ba; }
.sep { width: 9px; height: 22px; flex: none; position: relative; }
.sep::before { content: ""; position: absolute; left: 4px; top: 2px; bottom: 2px; width: 1px; background: #b4b8c8; }
.s8 { width: 8px; } .s7 { width: 7px; } .s10 { width: 10px; }
.over { width: 10px; height: 30px; flex: none; margin-left: 7px; position: relative; background: linear-gradient(#dfe1e8, #9a9a9a); }
.over.tight { margin-left: 4px; }
.over::after { content: ""; position: absolute; left: 2px; bottom: 6px; border: 3px solid transparent; border-top: 4px solid #111; border-bottom: 0; }
.tbgap { width: 2px; flex: none; }
.findbar { display: flex; align-items: center; height: 32px; width: 179px; padding-left: 1px; border: 1px solid #c6c9d6; border-width: 0 2px 2px 2px; background: #d5daec; }
.findbar .grip { margin-right: 2px; }
.mid { margin-left: 1px; }

.combo { display: flex; align-items: center; background: #fff; border: 1px solid #aeb2c0; flex: none; position: relative; font-size: 16px; }
.ctext { padding-left: 4px; flex: 1; white-space: nowrap; }
.grey { color: #8c8c8c; font-size: 15px; }
.cbtn { width: 21px; height: 100%; position: relative; background: linear-gradient(#f8f8f8, #ccc); border: 1px solid #777; display: block; flex: none; }
.cbtn::before { content: ""; position: absolute; left: 4px; top: 8px; border: 5px solid transparent; border-top: 6px solid #111; border-bottom: 0; }
.find { width: 100px; height: 30px; }
.font { width: 212px; height: 27px; margin-left: 9px; }
.size { width: 85px; height: 27px; margin-left: 8px; margin-right: 8px; }
.stylei { margin-left: 2px; }
.fmt { width: 25.500px; flex: none; text-align: center; font: bold 15px "Liberation Serif", "DejaVu Serif", serif; color: #111; }
.fmt.it { font-style: italic; font-size: 17px; }
.fmt.ul { text-decoration: underline; }
.pct { font: bold 15px "Liberation Sans", sans-serif; color: #333; }

.tiny { font: bold 6px "Liberation Sans", sans-serif; }
.tiny.big { font-size: 9px; }
.w { fill: #fff; } .b { fill: #1c5ca8; } .g { fill: #667; } .k { fill: #222; }
.q { font: bold 16px "Liberation Sans", sans-serif; fill: #fff; }
.fa { font: bold 16px "Liberation Sans", sans-serif; fill: #2c5a88; stroke: #123; stroke-width: .5px; }

/* work area */
.work { display: flex; min-height: 0; height: 887px; flex: none; }
.leftcol { width: 1873px; display: flex; flex-direction: column; flex: none; }
.strip { height: 21px; flex: none; background: #fafafa; padding-top: 8px; }
.strip-line { height: 8px; position: relative; background: #efefef; border-top: 1px solid #a8a8a8; border-bottom: 1px solid #a8a8a8; }
.handle { position: absolute; left: 920px; top: 1px; width: 34px; height: 4px; background: radial-gradient(circle, #667 0, #667 1px, transparent 1.200px) 0 0 / 5px 4px repeat-x; }
.fbar { height: 30px; flex: none; display: flex; align-items: flex-start; padding-left: 6px; background: #f6f6f6; }
.name { width: 155px; height: 27px; }
.fbi { width: 25.500px; height: 26px; flex: none; display: flex; align-items: center; justify-content: center; }
.fbi svg { width: 20px; height: 20px; }
.fx { margin-left: 7px; }
.finput { flex: 1; margin: 0 5px 0 8px; height: 26px; background: #fff; border: 1px solid #e0e0e0; border-top: 2px solid #777; border-left: 1px solid #888; font-size: 16px; line-height: 22px; padding: 0 0 0 5px; }
.sheetarea { height: 815px; flex: none; display: flex; }
.gridwrap { width: 1852px; flex: none; position: relative; overflow: hidden; background: #fff; }
.sheet { border-collapse: separate; border-spacing: 0; table-layout: fixed; width: 1880px; font: 14px/16px "Liberation Sans", Arial, sans-serif; color: #111; }
.c0 { width: 43px; } .c72 { width: 72px; } .c142 { width: 142px; } .c111 { width: 111px; } .c360 { width: 360px; }
.sheet thead th {
  height: 23px; padding: 0 0 0 2px; font: 15px/20px "Open Sans", sans-serif; color: #222;
  background: linear-gradient(#f9f9f9, #f2f2f2 50%, #ebebeb);
  border-right: 1px solid #777; border-bottom: 2px solid #777; border-top: 1px solid #999;
}
.sheet thead th.act { background: linear-gradient(#82bdf8, #82bdf8 35%, #3399ff 35%); color: #fff; border-right-color: #aaa; }
.sheet tbody th { height: 17px; padding: 0 0 0 2px; background: #f0f0f0; border-right: 1px solid #999; border-bottom: 1px solid #b4b4b4; font: 15px/16px "Open Sans", sans-serif; color: #222; }
.sheet td { height: 17px; padding: 0 2px 0 0; text-align: right; border-right: 1px solid #c0c0c0; border-bottom: 1px solid #c0c0c0; white-space: nowrap; overflow: visible; }
.sheet td:nth-child(4) { background: #0066cc; color: #fff; font-weight: bold; }
.sheet td:nth-child(19) { background: #ff3333; color: #fff; font-weight: bold; }
.sheet td.lb { font-weight: bold; }
.d td, .d td:nth-child(4), .d td:nth-child(19) { background: #330033; color: #fff; }
.sheet .d th { background: #3399ff; color: #fff; font-weight: bold; }
.y td { background: #ffff99; color: #111; }
.r td { background: #ff3333; color: #111; }
.sheet td.cur { position: relative; padding-right: 1px; outline: 3px solid #000; outline-offset: -2px; }
.sheet td.cur::after { content: ""; position: absolute; right: -5px; bottom: -4px; width: 6px; height: 6px; background: #000; }
.chart { position: absolute; left: 578px; top: 22px; display: block; font-family: "Liberation Sans", sans-serif; }
.gl path { stroke: #d2d2d2; stroke-width: 2; fill: none; }
.ax { stroke: #b3b3b3; stroke-width: 1; fill: none; }
.ax2 { stroke: #b3b3b3; stroke-width: 2; fill: none; }
.yl text { font-size: 10.500px; fill: #111; }
.leg text { font-size: 10.500px; letter-spacing: .5px; fill: #111; }
.sf { fill: none; stroke: #004586; stroke-width: 3; }
.su { fill: none; stroke: #ff420e; stroke-width: 3; }
.thin { stroke-width: 2; }

.vscroll { width: 21px; flex: none; display: flex; flex-direction: column; background: #f0f0f0; }
.vcap { height: 3px; background: #000; flex: none; }
.arrow { height: 35px; flex: none; position: relative; }
.arrow::before { content: ""; position: absolute; left: 6px; border: 4.500px solid transparent; }
.arrow.up::before { top: 9px; border-bottom: 5px solid #444; border-top: 0; }
.arrow.down { height: 22px; }
.arrow.down::before { top: 5px; border-top: 5px solid #444; border-bottom: 0; }
.vthumb { height: 210px; flex: none; margin: 0 1px; position: relative; border: 1px solid #aaa; border-radius: 2px; background: linear-gradient(90deg, #f6f6f6, #d4d4d4); }
.tgrip { position: absolute; left: 3px; right: 3px; top: 100px; height: 9px; border-top: 1px solid #555; border-bottom: 1px solid #555; }
.tgrip::after { content: ""; position: absolute; left: 0; right: 0; top: 3px; border-top: 1px solid #555; }
.vfill { flex: 1; }

.tabbar { height: 21px; flex: none; display: flex; align-items: stretch; background: #f0f0f0; padding-left: 4px; border-top: 1px solid #dcdcdc; position: relative; }
.nav { display: flex; gap: 4px; width: 80px; flex: none; padding-top: 1px; }
.nb { width: 16px; height: 18px; border: 1px solid #8a8a8a; border-radius: 3px; background: linear-gradient(#fafafa, #dcdcdc); position: relative; }
.nb::before { content: ""; position: absolute; top: 3px; border: 5px solid transparent; }
.nb.f::before, .nb.p::before { border-right: 5px solid #111; border-left: 0; left: 5px; }
.nb.n::before, .nb.l::before { left: 6px; border-left: 5px solid #111; border-right: 0; }
.nb.f::after { content: ""; position: absolute; left: 3px; top: 3px; width: 1px; height: 10px; background: #111; }
.nb.l::after { content: ""; position: absolute; right: 3px; top: 3px; width: 1px; height: 10px; background: #111; }
.tab { width: 59px; margin-left: -1px; flex: none; position: relative; display: flex; justify-content: center; font: 14px/19px "Open Sans", sans-serif; color: #111; }
.tab span { position: relative; }
.tab::before { content: ""; position: absolute; inset: 0 1px 1px 1px; background: #f2f2f2; border: 1px solid #444; border-top: 0; transform: perspective(30px) rotateX(-10deg); transform-origin: top; }
.tab.active { margin-left: 6px; font-weight: bold; }
.tab.active::before { background: #fff; }
.tabend { width: 3px; margin: 0 0 0 4px; border-left: 1px solid #555; flex: none; }
.hscroll { flex: 1; display: flex; align-items: stretch; position: relative; padding-left: 127px; padding-right: 14px; border-right: 3px solid #000; margin-right: 20px; }
.hl, .hr { position: absolute; top: 5px; border: 5px solid transparent; }
.hl { left: 8px; border-right: 5px solid #555; border-left: 0; }
.hr { right: 9px; border-left: 5px solid #555; border-right: 0; }
.hthumb { width: 677px; flex: none; position: relative; border: 1px solid #aaa; border-radius: 2px; background: linear-gradient(#f6f6f6, #d0d0d0); margin-bottom: 1px; }
.hgrip { position: absolute; left: 331px; top: 5px; width: 9px; height: 9px; border-left: 1px solid #555; border-right: 1px solid #555; }
.hgrip::after { content: ""; position: absolute; top: 0; bottom: 0; left: 3px; border-left: 1px solid #555; }

.sidebar { width: 47px; flex: none; display: flex; background: #f0f0f0; border-top: 1px solid #bbb; }
.sgrip { width: 7px; flex: none; background: #efefef; border-left: 1px solid #bbb; border-right: 1px solid #bbb; position: relative; }
.sgrip::after { content: ""; position: absolute; left: 1px; top: 427px; width: 4px; height: 30px; background: radial-gradient(circle, #667 0, #667 1px, transparent 1.200px) 0 0 / 4px 5px repeat-y; }
.sicons { flex: 1; display: flex; flex-direction: column; align-items: center; border-right: 1px solid #d4d4d4; }
.smenu { height: 36px; padding-top: 12px; line-height: 0; flex: none; }
.srule { width: 28px; height: 1px; background: #ccc; margin-top: 1px; margin-bottom: 4px; flex: none; }
.si { width: 32px; height: 35px; flex: none; display: flex; align-items: center; justify-content: center; }
.si svg { width: 28px; height: 28px; }
.si.on { border: 1px solid #aeb4bc; border-radius: 4px; background: #f6f6f6; }

/* status bar */
.statusbar { height: 28px; flex: none; display: flex; align-items: center; background: #f1f1f1; border-top: 2px solid #fff; font-size: 14px; color: #222; border-bottom: 1px solid #0a1e3a; }
.st { height: 23px; line-height: 25px; flex: none; white-space: nowrap; border-right: 1px solid #aaa; }
.st-sheet { width: 466px; padding-left: 12px; }
.st-style { width: 464px; padding-left: 8px; }
.st-lang { width: 56px; }
.st-mode { width: 63px; text-align: center; }
.st-mod { width: 21px; text-align: center; }
.st-sel { width: 31px; }
.st-sum { width: 615px; text-align: center; }
.st-zoom { width: 156px; height: 24px; flex: none; line-height: 0; border-right: 1px solid #aaa; }
.st-pct { border: 0; padding-left: 5px; }

/* taskbar */
.taskbar {
  height: 48px; flex: none; display: flex; align-items: center; padding-left: 11px; position: relative;
  background:
    radial-gradient(ellipse 120px 60px at 1140px 50px, rgba(90,140,205,.55), rgba(90,140,205,0)),
    radial-gradient(ellipse 170px 50px at 1290px 10px, rgba(70,120,190,.5), rgba(70,120,190,0)),
    radial-gradient(ellipse 100px 40px at 1580px 60px, rgba(90,140,205,.5), rgba(90,140,205,0)),
    linear-gradient(90deg, #021f4f 0, #05265a 8%, #0b2f66 15%, #1c4f8e 38%, #174684 50%, #2a5a9c 60%, #12407c 72%, #1a4a88 85%, #123c74 100%);
}
.orb { width: 44px; height: 44px; flex: none; }
.orb svg, .alice svg, .tk svg, .tkb svg { display: block; width: 100%; height: 100%; }
.alice { width: 40px; height: 40px; flex: none; margin-left: 30px; }
.tgrip2 { width: 11px; height: 42px; flex: none; margin-left: 25px; background: radial-gradient(circle, #9ab 0, #9ab 1px, transparent 1.300px) 0 0 / 4px 7px; }
.tk { width: 66px; height: 46px; flex: none; margin-left: 4px; padding: 3px 13px; position: relative; border: 1px solid rgba(190,215,240,.55); border-radius: 3px; background: linear-gradient(rgba(255,255,255,.42), rgba(255,255,255,.12) 48%, rgba(255,255,255,.04)); }
.tgrip2 + .tk { margin-left: 9px; }
.tkb { width: 40px; height: 40px; flex: none; margin-left: 16px; }
.tk + .tkb { margin-left: 17px; }
.tkb.op { margin-left: 30px; }
.op + .tk { margin-left: 17px; }
.activek { background: linear-gradient(rgba(255,255,255,.85), rgba(255,255,255,.55)); width: 61px; padding: 3px 10px; }
.tg svg { width: 38px; height: 38px; }
.badge { position: absolute; left: 33px; top: 25px; width: 20px; height: 17px; background: #777; border-radius: 4px; color: #fff; font: 10px/17px "Liberation Sans", sans-serif; text-align: center; }
.ps { font: bold 20px "Liberation Sans", sans-serif; fill: #7cc4f4; }
.tkend { width: 4px; height: 46px; margin-left: 1px; flex: none; border: 1px solid rgba(190,215,240,.6); border-radius: 2px; background: rgba(255,255,255,.2); }
.tray { position: absolute; right: 0; top: 0; bottom: 0; width: 259px; display: flex; align-items: center; color: #fff; }
.t3 { margin: 0; }
.lang { font-size: 14px; margin-left: 11px; width: 43px; margin-top: -4px; color: #dde6f2; }
.trayup { width: 0; height: 0; border: 5px solid transparent; border-bottom: 6px solid #fff; border-top: 0; }
.flag { margin-left: 20px; }
.swirl { margin-left: 12px; }
.clock { width: 96px; margin-left: 10px; display: flex; flex-direction: column; align-items: center; font-size: 14px; line-height: 21px; color: #e6edf6; padding-top: 3px; }
.showdesk { width: 14px; height: 48px; flex: none; margin-left: 1px; background: linear-gradient(#5a6f8e, #16305a); border-left: 1px solid #8ba; }
```
